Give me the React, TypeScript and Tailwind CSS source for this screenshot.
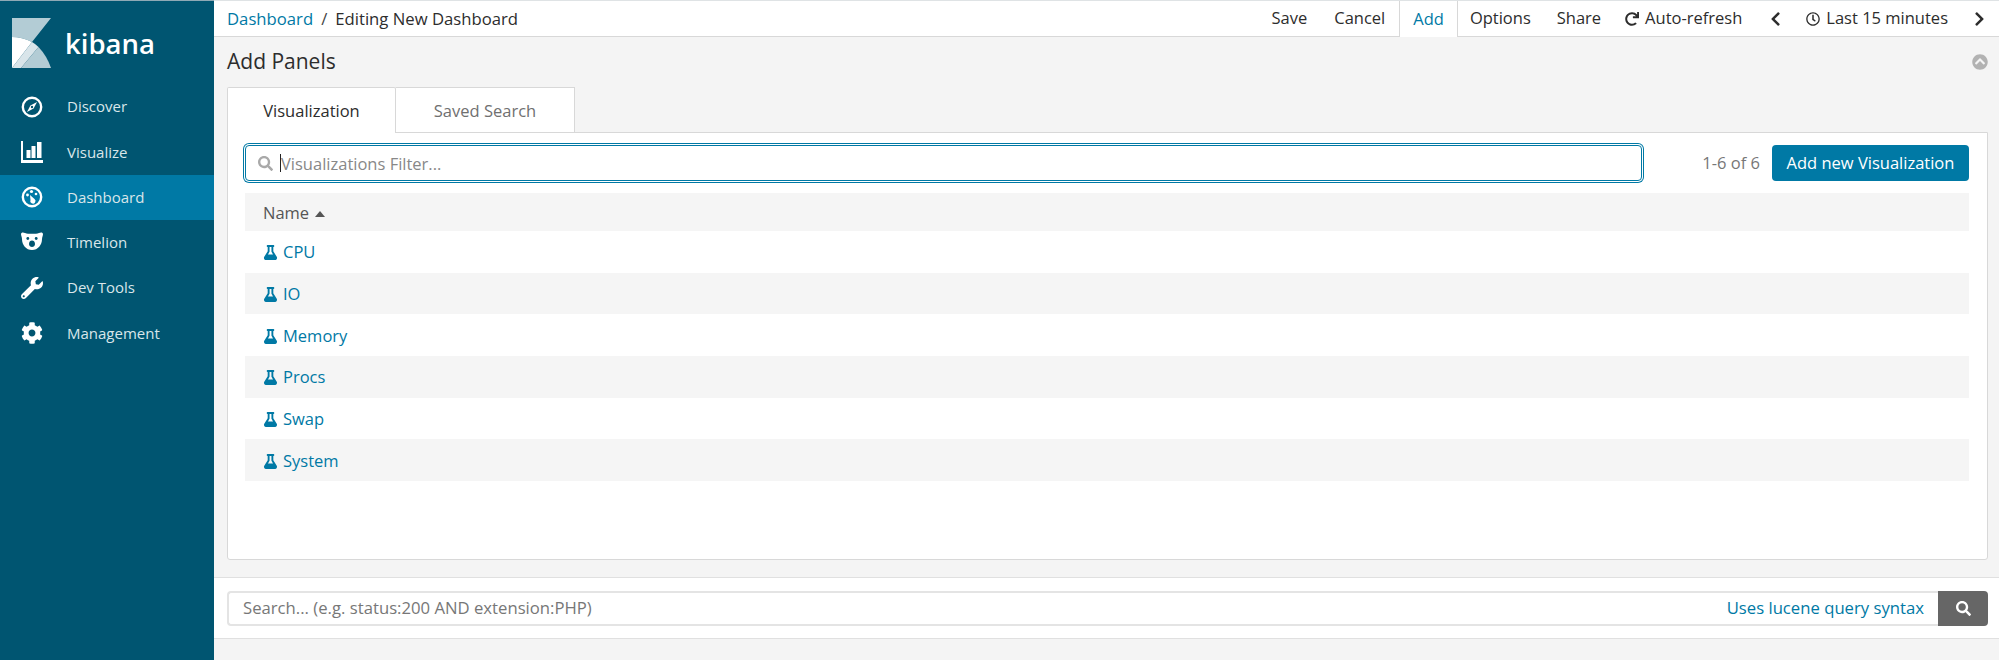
import { FaChevronCircleUp, FaChevronLeft, FaChevronRight, FaCog, FaFlask, FaRedo, FaRegClock, FaSearch, FaWrench } from 'react-icons/fa';

const CompassIcon = () => (
  <svg viewBox="0 0 22 22" className="w-[22px] h-[22px]" fill="none">
    <circle cx="11" cy="11" r="9.2" stroke="white" strokeWidth="2.4" />
    <path d="M16 6 L12.6 12.6 L6 16 L9.4 9.4 Z" fill="white" />
    <circle cx="11" cy="11" r="1.2" fill="#005571" />
  </svg>
);

const BarsIcon = () => (
  <svg viewBox="0 0 22 22" className="w-[22px] h-[22px]" fill="white">
    <path d="M0 0 H2 V19 H22 V22 H0 Z" />
    <rect x="5.5" y="9" width="4" height="8" />
    <rect x="10.5" y="5" width="4" height="12" />
    <rect x="16" y="1" width="4.5" height="16" />
  </svg>
);

const GaugeIcon = () => (
  <svg viewBox="0 0 22 22" className="w-[22px] h-[22px]" fill="none">
    <circle cx="11" cy="11" r="9.2" stroke="white" strokeWidth="2.4" />
    <path d="M9 9 L13.5 13 A2.6 2.6 0 1 1 9.5 14 Z" fill="white" />
    <circle cx="10.5" cy="5.5" r="1.6" fill="white" />
    <circle cx="6.5" cy="9" r="1.4" fill="white" />
    <circle cx="15" cy="8" r="1.3" fill="white" />
  </svg>
);

const BearIcon = () => (
  <svg viewBox="0 0 22 20" className="w-[22px] h-[20px]">
    <path d="M0 2 C0 .5 2 0 4 1 C5 1.6 6 1.8 7 1.8 H15 C16 1.8 17 1.6 18 1 C20 0 22 .5 22 2 C22 4 21 5 21 7 C21 13 17 18 11 18 C5 18 1 13 1 7 C1 5 0 4 0 2 Z" fill="white" />
    <circle cx="6.8" cy="6.5" r="1.4" fill="#005571" />
    <circle cx="15.2" cy="6.5" r="1.4" fill="#005571" />
    <path d="M8 12 C8 9.5 9.5 8.5 11 8.5 C12.5 8.5 14 9.5 14 12 C14 14 12.5 15 11 15 C9.5 15 8 14 8 12 Z" fill="#005571" />
  </svg>
);

const KibanaLogo = () => (
  <svg viewBox="0 0 39 50" className="w-[39px] h-[50px]">
    <path d="M0 0 H39 L20 24 Q10 19 0 19 Z" fill="#b3ccd5" />
    <path d="M0 19 Q10 19 20 24 L0 50 Z" fill="white" />
    <path d="M20 24 Q23.5 26 26.5 29 L9 50 H0 Z" fill="#d9e5ea" />
    <path d="M26.5 29 Q35 38 39 50 H9 Z" fill="#b3ccd5" />
  </svg>
);

const NAV = [
  { label: 'Discover', icon: <CompassIcon /> },
  { label: 'Visualize', icon: <BarsIcon /> },
  { label: 'Dashboard', icon: <GaugeIcon />, active: true },
  { label: 'Timelion', icon: <BearIcon /> },
  { label: 'Dev Tools', icon: <FaWrench className="w-[22px] h-[22px] text-white" /> },
  { label: 'Management', icon: <FaCog className="w-[22px] h-[22px] text-white" /> },
];

const ROWS = ['CPU', 'IO', 'Memory', 'Procs', 'Swap', 'System'];

export default function App() {
  return (
    <div className="flex w-[1999px] h-[660px] overflow-hidden bg-[#f4f4f4] text-[16.5px] text-[#2d2d2d] font-['Open_Sans',sans-serif]">
      <aside className="w-[214px] shrink-0 bg-[#005571] border-t border-[#8fa9b5] text-[15px]">
        <div className="h-[83px] flex items-start pt-[17px] pl-[12px]">
          <KibanaLogo />
          <span className="ml-[14px] mt-[6px] text-[27.5px] leading-[40px] font-semibold text-white">kibana</span>
        </div>
        {NAV.map(n => (
          <div
            key={n.label}
            className={`h-[45.25px] flex items-center pl-[21px] ${n.active ? 'bg-[#0079a5]' : ''}`}
          >
            <span className="w-[46px] flex items-center">{n.icon}</span>
            <span className="text-[#d9e6ea]">{n.label}</span>
          </div>
        ))}
      </aside>

      <main className="flex-1 min-w-0 flex flex-col">
        <header className="h-[37px] shrink-0 flex items-stretch justify-between bg-white border-y border-t-[#dfe3e5] border-b-[#d8d8d8] pl-[13px] pr-[14px]">
          <div className="flex items-center text-[16.7px]">
            <span className="text-[#0079a5]">Dashboard</span>
            <span className="mx-[8px] text-[#444]">/</span>
            <span>Editing New Dashboard</span>
          </div>
          <div className="flex items-center">
            <span>Save</span>
            <span className="ml-[27px]">Cancel</span>
            <span className="ml-[14px] h-[36px] -mb-[1px] px-[13px] flex items-center pt-[1px] bg-white border-x border-[#d8d8d8] text-[#0079a5]">Add</span>
            <span className="ml-[12px]">Options</span>
            <span className="ml-[26px]">Share</span>
            <FaRedo className="ml-[24px] w-[14px] h-[14px]" />
            <span className="ml-[6px]">Auto-refresh</span>
            <FaChevronLeft className="ml-[28px] w-[11px] h-[16px]" />
            <FaRegClock className="ml-[25px] w-[14px] h-[14px]" />
            <span className="ml-[6px]">Last 15 minutes</span>
            <FaChevronRight className="ml-[26px] w-[11px] h-[16px]" />
          </div>
        </header>

        <div className="flex-1 min-h-0 flex flex-col pl-[13px] pr-[11px]">
          <div className="h-[50px] shrink-0 flex justify-between pt-[10px]">
            <h1 className="text-[21px] leading-[28px] font-normal">Add Panels</h1>
            <FaChevronCircleUp className="w-[16px] h-[16px] mt-[7px] text-[#b2b2b2]" />
          </div>

          <div className="flex h-[46px] shrink-0 relative z-10 -mb-[1px]">
            <div className="w-[169px] flex items-center justify-center pt-[1px] bg-white border border-b-0 border-[#d8d8d8] rounded-t-[2px]">Visualization</div>
            <div className="w-[179px] flex items-center justify-center pt-[2px] bg-white border border-l-0 border-[#d8d8d8] text-[#707070]">Saved Search</div>
          </div>

          <section className="h-[428px] shrink-0 bg-white border border-[#d8d8d8] rounded-b-[3px] pt-[11px] pl-[17px] pr-[18px]">
            <div className="flex items-center h-[38px]">
              <div className="relative w-[1397px] h-[36px]">
                <FaSearch className="absolute left-[13px] top-[11px] w-[15px] h-[15px] text-[#a9a9a9]" />
                <input
                  readOnly
                  placeholder="Visualizations Filter..."
                  className="w-full h-full pl-[35px] pr-2 bg-white border border-[#0079a5] rounded-[4px] shadow-[0_0_0_1px_#fff,0_0_0_2px_#0079a5] outline-none placeholder:text-[#888]"
                />
                <span className="absolute left-[35px] top-[9px] w-px h-[18px] bg-[#222]" />
              </div>
              <span className="ml-auto text-[#777]">1-6 of 6</span>
              <button className="ml-[12px] w-[197px] h-[36px] bg-[#0079a5] text-white rounded-[4px]">Add new Visualization</button>
            </div>

            <div className="mt-[11px]">
              <div className="h-[38px] flex items-center pl-[18px] pt-[3px] bg-[#f5f5f5] text-[#555]">
                Name
                <svg viewBox="0 0 10 6" className="ml-[6px] w-[10px] h-[6px]" fill="#555"><path d="M5 0 L10 6 H0 Z" /></svg>
              </div>
              {ROWS.map((r, i) => (
                <div key={r} className={`h-[41.67px] flex items-center pl-[18px] pt-[2px] text-[#0079a5] ${i % 2 === 1 ? 'bg-[#f5f5f5]' : ''}`}>
                  <FaFlask className="w-[15px] h-[15px] mr-[5px]" />
                  {r}
                </div>
              ))}
            </div>
          </section>
        </div>

        <div className="h-[62px] shrink-0 flex items-center bg-white border-y border-[#e0e0e0] pl-[13px] pr-[11px] mb-[21px] text-[16.7px]">
          <div className="flex-1 h-[35px] flex items-center justify-between border-2 border-r-0 border-[#e4e4e4] rounded-l-[4px] pl-[14px] pr-[14px]">
            <span className="text-[#777]">Search... (e.g. status:200 AND extension:PHP)</span>
            <span className="text-[#0079a5]">Uses lucene query syntax</span>
          </div>
          <button className="w-[50px] h-[35px] flex items-center justify-center bg-[#666] rounded-r-[4px] text-white">
            <FaSearch className="w-[15px] h-[15px]" />
          </button>
        </div>
      </main>
    </div>
  );
}
